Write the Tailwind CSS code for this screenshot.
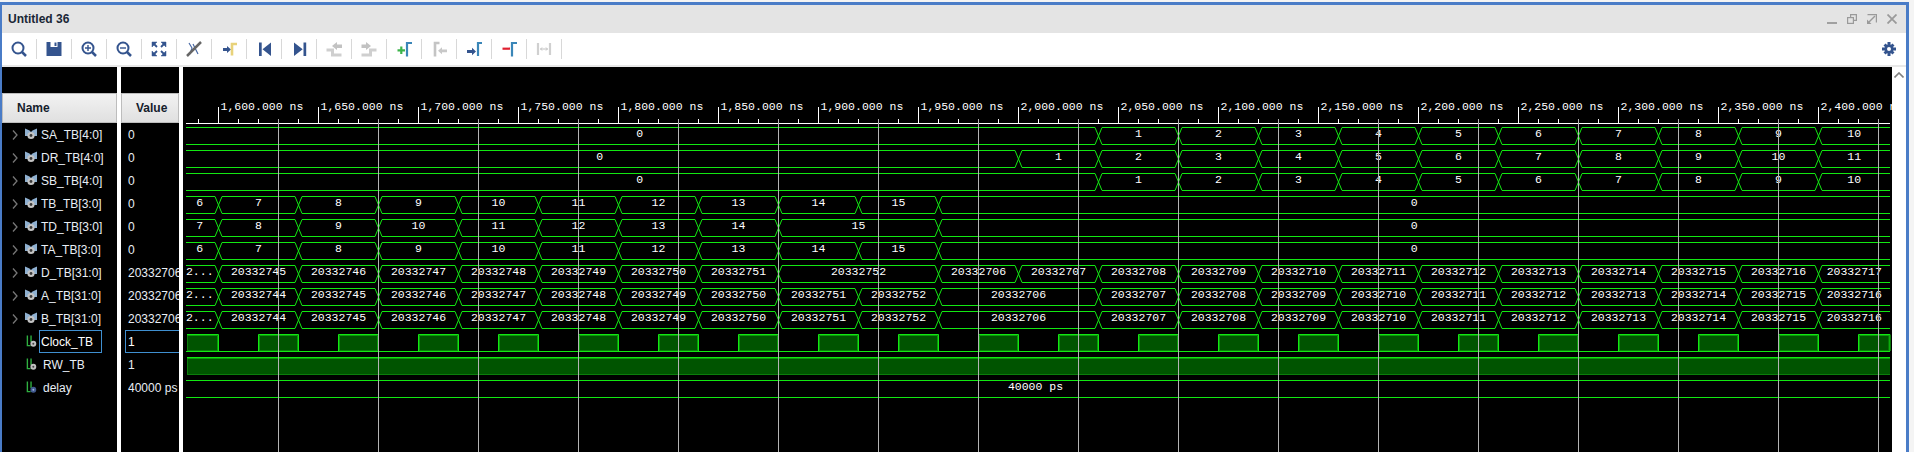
<!DOCTYPE html>
<html>
<head>
  <title>Untitled 36</title>
  <script src="https://cdn.jsdelivr.net/npm/@tailwindcss/browser@4"></script>
</head>
<body class="bg-[#f4f4f4] pt-[2px] h-[452px] overflow-hidden font-['Liberation_Sans',sans-serif]">
<svg class="hidden">
  <symbol id="chev" viewBox="0 0 6 10"><path d="M1 .5 5 5 1 9.500" fill="none" stroke="#777" stroke-width="1.300"/></symbol>
  <symbol id="bus" viewBox="0 0 12 12"><path d="M0 .5 4.500 2.500 6 4l1.500-1.500L12 .5V8H0z" fill="#8fb0d0"/><circle cx="6" cy="7.500" r="3.600" fill="#c4c4c4"/><circle cx="6" cy="7.500" r="1.400" fill="#3a3a3a"/></symbol>
  <symbol id="wire" viewBox="0 0 12 14"><path d="M1.500 1v11H5M5.500 1v7" fill="none" stroke="#2fb040" stroke-width="1.500"/><circle cx="8" cy="10" r="3.200" fill="#c0c0c0"/><circle cx="8" cy="10" r="1.100" fill="#444"/></symbol>
  <symbol id="wire2" viewBox="0 0 12 14"><path d="M1.500 1v11H5M5.500 1v7" fill="none" stroke="#2fb040" stroke-width="1.500"/><circle cx="8" cy="10" r="3.200" fill="#41598f"/><circle cx="8" cy="10" r="1.100" fill="#9fb3d8"/></symbol>
</svg>

<div class="w-[1909px] h-[450px] border-t-[3px] border-l-2 border-r-[3px] border-[#4a7cc7] flex flex-col">
  <!-- title bar -->
  <div class="h-[28px] bg-[#e4e4e4] flex items-center justify-between pl-[6px] pr-[9px]">
    <span class="text-[12px] font-bold text-[#1a2736]">Untitled 36</span>
    <div class="flex items-center gap-[10px]">
      <svg width="10" height="10" viewBox="0 0 10 10"><path d="M0 9h10" stroke="#a0a0a0" stroke-width="2"/></svg>
      <svg width="10" height="10" viewBox="0 0 10 10" fill="none" stroke="#9a9a9a" stroke-width="1.200"><rect x=".6" y="3.600" width="5.800" height="5.800"/><path d="M3.600 3.600V.6h5.800v5.800H6.400"/></svg>
      <svg width="10" height="10" viewBox="0 0 10 10" fill="#9a9a9a"><path d="M0 10V5.500L4.500 10zM.5 0H10v8.500H8.800V1.200H.5z"/><path d="M2 8 8 2" stroke="#9a9a9a" stroke-width="1.500"/></svg>
      <svg width="10" height="10" viewBox="0 0 10 10"><path d="M.5.5l9 9M9.500.5l-9 9" stroke="#9a9a9a" stroke-width="1.800"/></svg>
    </div>
  </div>

  <!-- toolbar -->
  <div class="h-[34px] bg-white border-b-2 border-[#e8e8e8] flex items-center">
    <div class="w-[35px] h-[20px] border-r border-[#d8d8d8] flex items-center justify-center pr-px">
      <svg width="20" height="20" viewBox="0 0 20 20" fill="none" stroke="#34548e"><circle cx="9" cy="9" r="5.500" stroke-width="2"/><path d="M13 13l4 4" stroke-width="2.500"/></svg>
    </div>
    <div class="w-[35px] h-[20px] border-r border-[#d8d8d8] flex items-center justify-center pr-px">
      <svg width="20" height="20" viewBox="0 0 20 20"><path d="M2.500 3H17.500V17H2.500z" fill="#34548e"/><path d="M6.500 3h7v5h-7z" fill="#fff"/><path d="M10.500 3.500h2v3.500h-2z" fill="#34548e"/></svg>
    </div>
    <div class="w-[35px] h-[20px] border-r border-[#d8d8d8] flex items-center justify-center pr-px">
      <svg width="20" height="20" viewBox="0 0 20 20" fill="none" stroke="#34548e"><circle cx="9" cy="9" r="5.500" stroke-width="2"/><path d="M13 13l4 4" stroke-width="2.500"/><path d="M6 9h6M9 6v6" stroke-width="1.400"/></svg>
    </div>
    <div class="w-[35px] h-[20px] border-r border-[#d8d8d8] flex items-center justify-center pr-px">
      <svg width="20" height="20" viewBox="0 0 20 20" fill="none" stroke="#34548e"><circle cx="9" cy="9" r="5.500" stroke-width="2"/><path d="M13 13l4 4" stroke-width="2.500"/><path d="M6 9h6" stroke-width="1.400"/></svg>
    </div>
    <div class="w-[35px] h-[20px] border-r border-[#d8d8d8] flex items-center justify-center pr-px">
      <svg width="20" height="20" viewBox="0 0 20 20" fill="#34548e" stroke="#34548e"><path d="M3 3h5L3 8zM17 3h-5l5 5zM3 17h5l-5-5zM17 17h-5l5-5z" stroke-width=".5"/><path d="M4 4l4 4M16 4l-4 4M4 16l4-4M16 16l-4-4" stroke-width="1.800"/></svg>
    </div>
    <div class="w-[35px] h-[20px] border-r border-[#d8d8d8] flex items-center justify-center pr-px">
      <svg width="20" height="20" viewBox="0 0 20 20" fill="none"><path d="M5 4l3 5-2 6M9 5l5 10" stroke="#4a6aa5" stroke-width="1.200"/><path d="M3 17 17 3" stroke="#666" stroke-width="2.500"/></svg>
    </div>
    <div class="w-[35px] h-[20px] border-r border-[#d8d8d8] flex items-center justify-center pr-px">
      <svg width="20" height="20" viewBox="0 0 20 20"><path d="M4 9h4V7l4 3.500L8 14v-2H4z" fill="#34548e"/><path d="M13 16.500V5H18" fill="none" stroke="#e8d27a" stroke-width="2.600"/></svg>
    </div>
    <div class="w-[35px] h-[20px] border-r border-[#d8d8d8] flex items-center justify-center pr-px">
      <svg width="20" height="20" viewBox="0 0 20 20" fill="#34548e"><path d="M5 3.500h2.700v13.500H5zM17 3.500V17l-8.500-6.700z"/></svg>
    </div>
    <div class="w-[35px] h-[20px] border-r border-[#d8d8d8] flex items-center justify-center pr-px">
      <svg width="20" height="20" viewBox="0 0 20 20" fill="#34548e"><path d="M14.500 3.500h2.700V17h-2.700zM5 3.500V17l8.700-6.700z"/></svg>
    </div>
    <div class="w-[35px] h-[20px] border-r border-[#d8d8d8] flex items-center justify-center pr-px">
      <svg width="20" height="20" viewBox="0 0 20 20"><path d="M2.500 11h6v5h9" fill="none" stroke="#cfcfcf" stroke-width="3"/><path d="M8 7l5-4v2.500h5v3.500h-5v2z" fill="#c2c2c2"/></svg>
    </div>
    <div class="w-[35px] h-[20px] border-r border-[#d8d8d8] flex items-center justify-center pr-px">
      <svg width="20" height="20" viewBox="0 0 20 20"><path d="M2.500 16h9v-5h6" fill="none" stroke="#cfcfcf" stroke-width="3"/><path d="M12 7 7 3v2.500H2.500V9H7v2z" fill="#c2c2c2"/></svg>
    </div>
    <div class="w-[35px] h-[20px] border-r border-[#d8d8d8] flex items-center justify-center pr-px">
      <svg width="20" height="20" viewBox="0 0 20 20"><path d="M3.500 11.300H11M7.300 7.500v7.500" stroke="#3cb44a" stroke-width="2.200"/><path d="M13 17.500V4H18" fill="none" stroke="#3a86b8" stroke-width="2.200"/></svg>
    </div>
    <div class="w-[35px] h-[20px] border-r border-[#d8d8d8] flex items-center justify-center pr-px">
      <svg width="20" height="20" viewBox="0 0 20 20"><path d="M6 17.500V4H10.500" fill="none" stroke="#c4c4c4" stroke-width="2.600"/><path d="M9 11.700l4-3.400v2.200h5v2.800h-5v2z" fill="#c8c8c8"/></svg>
    </div>
    <div class="w-[35px] h-[20px] border-r border-[#d8d8d8] flex items-center justify-center pr-px">
      <svg width="20" height="20" viewBox="0 0 20 20"><path d="M3 11h5V8.800l4 3.700-4 3.700V14H3z" fill="#34548e"/><path d="M14 17V4H18" fill="none" stroke="#3a86b8" stroke-width="2.200"/></svg>
    </div>
    <div class="w-[35px] h-[20px] border-r border-[#d8d8d8] flex items-center justify-center pr-px">
      <svg width="20" height="20" viewBox="0 0 20 20"><path d="M3.500 9.700H11" stroke="#e02030" stroke-width="2.200"/><path d="M13 17.500V4H18" fill="none" stroke="#3a86b8" stroke-width="2.200"/></svg>
    </div>
    <div class="w-[35px] h-[20px] border-r border-[#d8d8d8] flex items-center justify-center pr-px">
      <svg width="20" height="20" viewBox="0 0 20 20" fill="none"><path d="M4 4v12M16 4v12" stroke="#d0d0d0" stroke-width="2.200"/><path d="M6.500 10h7M8 8.500 6.500 10 8 11.500M12 8.500l1.500 1.500-1.500 1.500" stroke="#c0c0c0"/></svg>
    </div>
    <svg class="ml-auto mr-[9px]" width="16" height="16" viewBox="0 0 16 16"><path d="M8 3.500a4.500 4.500 0 1 0 0 9 4.500 4.500 0 0 0 0-9zm0 2.500a2 2 0 1 1 0 4 2 2 0 0 1 0-4z" fill="#34548e" fill-rule="evenodd"/><path d="M6.500 1h3v3h-3zM6.500 12h3v3h-3zM1 6.500h3v3H1zM12 6.500h3v3h-3zM2.500 4.600 4.600 2.500l2 2-2.100 2.100zM11.400 2.500l2.100 2.100-2 2L9.400 4.500zM2.500 11.400l2.100 2.100 2-2-2.100-2.100zM13.500 11.400l-2.100 2.100-2-2 2.100-2.100z" fill="#34548e"/></svg>
  </div>

  <div class="flex flex-1 min-h-0">
    <!-- name column -->
    <div class="w-[115px] bg-black pt-[26px] text-[12px] text-[#e8eef5]">
      <div class="h-[30px] bg-linear-to-b from-[#f2f2f2] to-[#e0e0e0] border border-[#bdbdbd] flex items-center pl-[14px] font-bold text-[#14202c]">Name</div>
      <div class="h-[23px] flex items-center"><svg class="ml-[10px] w-[6px] h-[10px]"><use href="#chev"/></svg><svg class="ml-[7px] w-[12px] h-[12px] -mt-[2px]"><use href="#bus"/></svg><span class="ml-[4px]">SA_TB[4:0]</span></div>
      <div class="h-[23px] flex items-center"><svg class="ml-[10px] w-[6px] h-[10px]"><use href="#chev"/></svg><svg class="ml-[7px] w-[12px] h-[12px] -mt-[2px]"><use href="#bus"/></svg><span class="ml-[4px]">DR_TB[4:0]</span></div>
      <div class="h-[23px] flex items-center"><svg class="ml-[10px] w-[6px] h-[10px]"><use href="#chev"/></svg><svg class="ml-[7px] w-[12px] h-[12px] -mt-[2px]"><use href="#bus"/></svg><span class="ml-[4px]">SB_TB[4:0]</span></div>
      <div class="h-[23px] flex items-center"><svg class="ml-[10px] w-[6px] h-[10px]"><use href="#chev"/></svg><svg class="ml-[7px] w-[12px] h-[12px] -mt-[2px]"><use href="#bus"/></svg><span class="ml-[4px]">TB_TB[3:0]</span></div>
      <div class="h-[23px] flex items-center"><svg class="ml-[10px] w-[6px] h-[10px]"><use href="#chev"/></svg><svg class="ml-[7px] w-[12px] h-[12px] -mt-[2px]"><use href="#bus"/></svg><span class="ml-[4px]">TD_TB[3:0]</span></div>
      <div class="h-[23px] flex items-center"><svg class="ml-[10px] w-[6px] h-[10px]"><use href="#chev"/></svg><svg class="ml-[7px] w-[12px] h-[12px] -mt-[2px]"><use href="#bus"/></svg><span class="ml-[4px]">TA_TB[3:0]</span></div>
      <div class="h-[23px] flex items-center"><svg class="ml-[10px] w-[6px] h-[10px]"><use href="#chev"/></svg><svg class="ml-[7px] w-[12px] h-[12px] -mt-[2px]"><use href="#bus"/></svg><span class="ml-[4px]">D_TB[31:0]</span></div>
      <div class="h-[23px] flex items-center"><svg class="ml-[10px] w-[6px] h-[10px]"><use href="#chev"/></svg><svg class="ml-[7px] w-[12px] h-[12px] -mt-[2px]"><use href="#bus"/></svg><span class="ml-[4px]">A_TB[31:0]</span></div>
      <div class="h-[23px] flex items-center"><svg class="ml-[10px] w-[6px] h-[10px]"><use href="#chev"/></svg><svg class="ml-[7px] w-[12px] h-[12px] -mt-[2px]"><use href="#bus"/></svg><span class="ml-[4px]">B_TB[31:0]</span></div>
      <div class="h-[23px] flex items-center"><svg class="ml-[24px] w-[11px] h-[14px] -mt-[2px]"><use href="#wire"/></svg><span class="ml-[2px] w-[63px] h-[23px] border border-[#3f8fd0] text-white flex items-center pl-px">Clock_TB</span></div>
      <div class="h-[23px] flex items-center"><svg class="ml-[24px] w-[11px] h-[14px] -mt-[2px]"><use href="#wire"/></svg><span class="ml-[6px]">RW_TB</span></div>
      <div class="h-[23px] flex items-center"><svg class="ml-[24px] w-[11px] h-[14px] -mt-[2px]"><use href="#wire2"/></svg><span class="ml-[6px]">delay</span></div>
    </div>
    <div class="w-[4px] bg-white"></div>

    <!-- value column -->
    <div class="w-[58px] bg-black pt-[26px] text-[12px] text-[#e8eef5] overflow-hidden whitespace-nowrap">
      <div class="h-[30px] bg-linear-to-b from-[#f2f2f2] to-[#e0e0e0] border border-[#bdbdbd] flex items-center pl-[14px] font-bold text-[#14202c]">Value</div>
      <div class="h-[23px] flex items-center pl-[7px]">0</div>
      <div class="h-[23px] flex items-center pl-[7px]">0</div>
      <div class="h-[23px] flex items-center pl-[7px]">0</div>
      <div class="h-[23px] flex items-center pl-[7px]">0</div>
      <div class="h-[23px] flex items-center pl-[7px]">0</div>
      <div class="h-[23px] flex items-center pl-[7px]">0</div>
      <div class="h-[23px] flex items-center pl-[7px]">20332706</div>
      <div class="h-[23px] flex items-center pl-[7px]">20332706</div>
      <div class="h-[23px] flex items-center pl-[7px]">20332706</div>
      <div class="h-[23px] ml-[4px] border-y border-l border-[#3f8fd0] text-white flex items-center pl-[2px]">1</div>
      <div class="h-[23px] flex items-center pl-[7px]">1</div>
      <div class="h-[23px] flex items-center pl-[7px]">40000 ps</div>
    </div>
    <div class="w-[4px] bg-white"></div>

    <!-- waveform canvas -->
    <div class="w-[1709px] bg-black overflow-hidden">
      <svg id="waves" class="block" width="1709" height="385" viewBox="183 67 1709 385"></svg>
    </div>

    <!-- scrollbar -->
    <div class="w-[14px] bg-white flex justify-center pt-[5px]">
      <svg width="10" height="6" viewBox="0 0 10 6"><path d="M.5 5.500 5 1l4.500 4.500" fill="none" stroke="#808080" stroke-width="1.600"/></svg>
    </div>
  </div>
</div>

<script>
const LEFT = 186, RIGHT = 1890, LABEL_LEFT = 181;
const GREEN = '#12e812', MID = '#0a9a0a', DARK = '#0b7d0b', FILL = '#005400';
const TEXT = 'font-family="Liberation Mono" font-size="11.5" fill="#fff"';
let out = '';

// transitions sit on a 80px grid (40 ns), starting from 218.5
const t = k => 218.5 + 80 * k;
function seq(startK, first, count) {
  const segs = [];
  for (let i = 0; i < count; i++) segs.push([t(startK + i), first + i]);
  return segs;
}

function busRow(y, segs) {
  const top = y + .5, bottom = y + 17.5;
  let d = '', labels = '';
  for (let i = 0; i < segs.length; i++) {
    const [start, label] = segs[i];
    const end = i + 1 < segs.length ? segs[i + 1][0] : RIGHT;
    const from = i === 0 ? LEFT : start + 3.5;
    const to = i + 1 < segs.length ? end - 3.5 : RIGHT;
    d += `M${from} ${top}H${to}M${from} ${bottom}H${to}`;
    if (i + 1 < segs.length) d += `M${to} ${top}L${to + 7} ${bottom}M${to} ${bottom}L${to + 7} ${top}`;
    const center = ((i === 0 ? LABEL_LEFT : start) + end) / 2;
    labels += `<text x="${center}" y="${y + 10}" text-anchor="middle" ${TEXT}>${label}</text>`;
  }
  out += `<path d="${d}" fill="none" stroke="${GREEN}"/>` + labels;
}

const counter = [[LEFT, 0], ...seq(11, 1, 10)];
const dest = [[LEFT, 0], ...seq(10, 1, 11)];
const tb = [[LEFT, 6], ...seq(0, 7, 9), [t(9), 0]];
const td = [[LEFT, 7], ...seq(0, 8, 7), [t(7), 15], [t(9), 0]];
const d = [[LEFT, '2...'], ...seq(0, 20332745, 7), [t(7), 20332752], [t(9), 20332706], ...seq(10, 20332707, 11)];
const ab = [[LEFT, '2...'], ...seq(0, 20332744, 9), [t(9), 20332706], ...seq(11, 20332707, 10)];

[counter, dest, counter, tb, td, tb, d, ab, ab].forEach((segs, i) => busRow(127 + 23 * i, segs));

// Clock_TB: bright outer edge, mid green just inside it, dark along the bottom
const cy = 334;
function high(x1, x2) {
  x2 = Math.min(x2, RIGHT);
  out += `<rect x="${x1}" y="${cy}" width="${x2 - x1}" height="17" fill="${FILL}"/>`;
  out += `<path d="M${x1 + 1} ${cy + 17}V${cy + 1.5}H${x2 - 1}V${cy + 17}" fill="none" stroke="${MID}"/>`;
  out += `<path d="M${x1} ${cy + 17}V${cy + .5}H${x2}V${cy + 17}" fill="none" stroke="${GREEN}"/>`;
  out += `<path d="M${x1 + 1} ${cy + 16.5}H${x2 - 1}" stroke="${DARK}"/>`;
}
out += `<path d="M${LEFT} ${cy + 17.5}H${RIGHT}" stroke="${GREEN}"/>`;
out += `<rect x="187" y="${cy}" width="31" height="17" fill="${FILL}"/><path d="M187.5 ${cy + 17}V${cy + 1}M187 ${cy + 16.5}H217" stroke="${DARK}"/><path d="M187 ${cy + 1.5}H217.5V${cy + 17}" fill="none" stroke="${MID}"/><path d="M187 ${cy + .5}H218.5V${cy + 17}" fill="none" stroke="${GREEN}"/>`;
for (let x = 258.5; x < RIGHT; x += 80) high(x, x + 40);

// RW_TB
out += `<rect x="187" y="357" width="1703" height="18" fill="${FILL}"/><path d="M187 374.5H1890M187.5 375V358" stroke="${DARK}"/><path d="M187 358.5H1890" stroke="${MID}"/><path d="M187 357.5H1890" stroke="${GREEN}"/>`;

// delay
busRow(380, [[LEFT, '40000 ps']]);

// ruler
let ruler = `M${LEFT} 123.5H${RIGHT}`;
for (let x = 198.5; x < RIGHT; x += 20) ruler += `M${x} 119V123`;
for (let x = 218.5; x < RIGHT; x += 100) ruler += `M${x} 107V123`;
out += `<path d="${ruler}" stroke="#fff"/>`;
for (let i = 0; i <= 16; i++) {
  const ns = 1600 + 50 * i;
  const label = `${Math.floor(ns / 1000)},${String(ns % 1000).padStart(3, '0')}.000 ns`;
  out += `<text x="${220.5 + 100 * i}" y="110" ${TEXT}>${label}</text>`;
}

// cursor grid lines
let grid = '';
for (let x = 278.5; x < RIGHT; x += 100) grid += `M${x} 119V452`;
out += `<path d="${grid}" stroke="#b4b4b4"/>`;

document.getElementById('waves').innerHTML = out;
</script>
</body>
</html>
